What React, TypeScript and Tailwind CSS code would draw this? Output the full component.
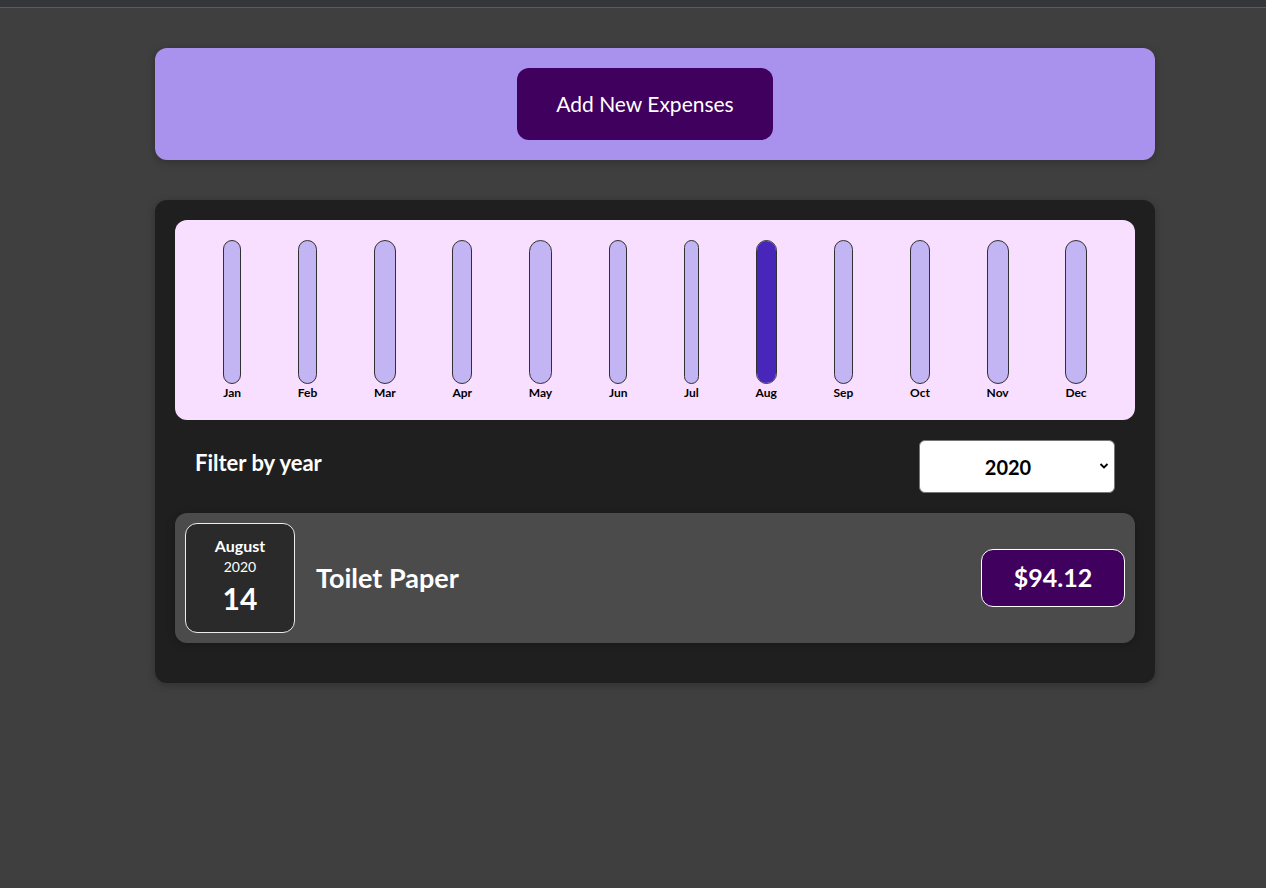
const months = ["Jan", "Feb", "Mar", "Apr", "May", "Jun", "Jul", "Aug", "Sep", "Oct", "Nov", "Dec"];

const ChartBar: React.FC<{ label: string; fill: number }> = ({ label, fill }) => (
  <div className="flex h-full flex-col items-center">
    <div className="flex h-[144px] w-full flex-col justify-end overflow-hidden rounded-[12px] border border-[#313131] bg-[#c3b4f3]">
      <div className="w-full bg-[#4826b9]" style={{ height: `${fill}%` }} />
    </div>
    <div className="pt-[2px] text-[12px] leading-[14px] font-bold text-black">{label}</div>
  </div>
);

export default function App() {
  return (
    <div className="min-h-[888px] bg-[#3f3f3f] font-['Lato','Noto_Sans',sans-serif]">
      <div className="h-[8px] border-b border-[#5c5c5e] bg-[#35363a]" />

      <div className="mt-[40px] ml-[155px] flex w-[1000px] justify-center rounded-[12px] bg-[#a892ee] py-[20px] shadow-[0_2px_8px_rgba(0,0,0,0.25)]">
        <button className="mr-[20px] h-[72px] w-[256px] rounded-[12px] bg-[#40005d] text-[21px] text-white">
          Add New Expenses
        </button>
      </div>

      <div className="mt-[40px] ml-[155px] w-[1000px] rounded-[12px] bg-[#1f1f1f] p-[20px] pb-[40px] shadow-[0_2px_8px_rgba(0,0,0,0.25)]">
        <div className="flex h-[200px] justify-around rounded-[12px] bg-[#f8dfff] px-[20px] py-[20px]">
          {months.map((m) => (
            <ChartBar key={m} label={m} fill={m === "Aug" ? 100 : 0} />
          ))}
        </div>

        <div className="my-[20px] flex h-[53px] items-center justify-between px-[20px]">
          <span className="pb-[8px] text-[22px] font-bold text-white">Filter by year</span>
          <div className="relative">
            <select className="h-[53px] w-[196px] appearance-none rounded-[6px] border border-[#767676] bg-white pr-[18px] text-center text-[20px] font-bold text-black">
              <option>2020</option>
              <option>2021</option>
              <option>2022</option>
            </select>
            <svg className="pointer-events-none absolute top-[22px] right-[6px]" width="10" height="8" viewBox="0 0 10 8">
              <path d="M1.5 2 L5 5.5 L8.5 2" fill="none" stroke="#000" strokeWidth="1.8" />
            </svg>
          </div>
        </div>

        <div className="flex items-center rounded-[12px] bg-[#4b4b4b] p-[10px] shadow-[0_1px_8px_rgba(0,0,0,0.25)]">
          <div className="flex h-[110px] w-[110px] flex-col items-center justify-center rounded-[12px] border border-[#ececec] bg-[#2a2a2a] pb-[2px] text-white">
            <div className="text-[16px] leading-[22px] font-bold">August</div>
            <div className="text-[14px] leading-[20px]">2020</div>
            <div className="text-[30px] leading-[42px] font-bold">14</div>
          </div>
          <div className="flex flex-1 items-center justify-between pl-[21px]">
            <h2 className="text-[27px] font-bold text-white">Toilet Paper</h2>
            <div className="flex h-[58px] w-[144px] items-center justify-center rounded-[12px] border border-white bg-[#40005d] text-[25px] font-bold text-white">
              $94.12
            </div>
          </div>
        </div>
      </div>
    </div>
  );
}
